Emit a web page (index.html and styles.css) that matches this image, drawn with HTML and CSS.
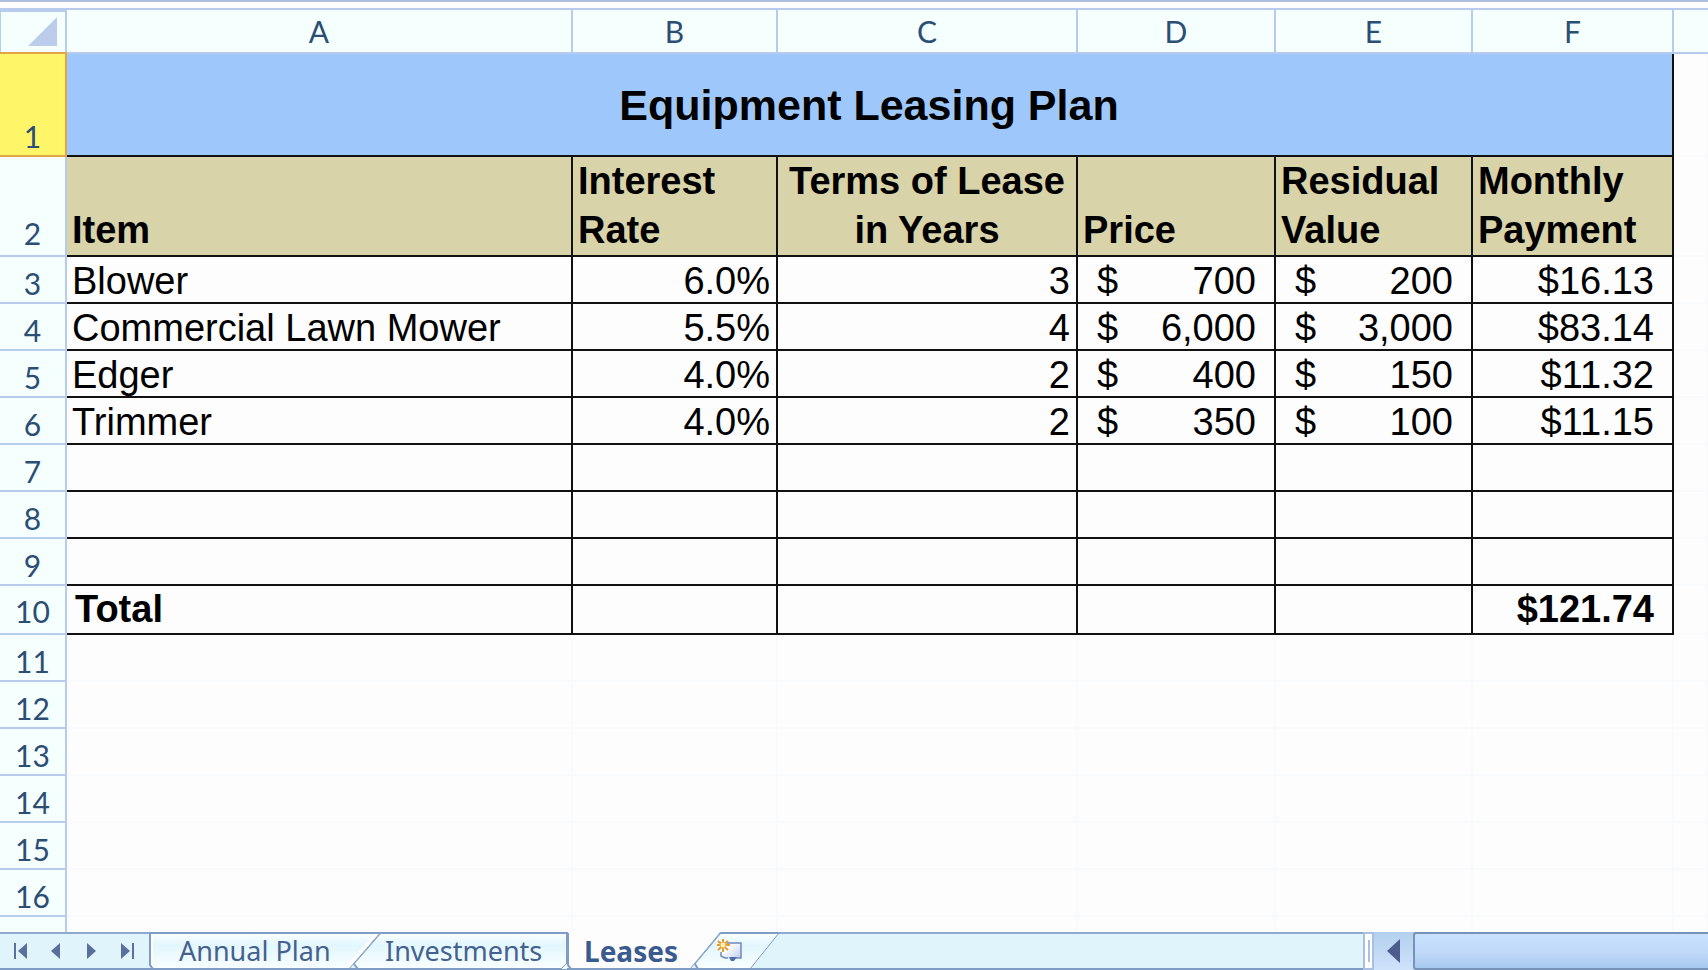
FILE: index.html
```html
<!DOCTYPE html>
<html lang="en">
<head>
  <meta charset="UTF-8">
  <meta name="viewport" content="width=device-width, initial-scale=1.0">
  <title>Equipment Leasing Plan</title>
  <link rel="stylesheet" href="styles.css">
</head>
<body>

<main class="sheet">
  <table>
    <colgroup>
      <col class="col-head">
      <col class="col-a">
      <col class="col-b">
      <col class="col-c">
      <col class="col-d">
      <col class="col-e">
      <col class="col-f">
      <col>
    </colgroup>
    <thead>
      <tr>
        <th class="corner"><svg width="30" height="30" viewBox="0 0 30 30"><path d="M29 0V29H0Z" fill="#bccdec"/></svg></th>
        <th scope="col">A</th>
        <th scope="col">B</th>
        <th scope="col">C</th>
        <th scope="col">D</th>
        <th scope="col">E</th>
        <th scope="col">F</th>
        <th></th>
      </tr>
    </thead>
    <tbody class="plan">
      <tr class="title">
        <th class="selected" scope="row">1</th>
        <td colspan="6">Equipment Leasing Plan</td>
        <td></td>
      </tr>
      <tr class="labels">
        <th scope="row">2</th>
        <td>Item</td>
        <td>Interest<br>Rate</td>
        <td class="center">Terms of Lease<br>in Years</td>
        <td>Price</td>
        <td>Residual<br>Value</td>
        <td>Monthly<br>Payment</td>
        <td></td>
      </tr>
      <tr>
        <th scope="row">3</th>
        <td>Blower</td>
        <td class="num">6.0%</td>
        <td class="num">3</td>
        <td><div class="money"><span>$</span><span>700</span></div></td>
        <td><div class="money"><span>$</span><span>200</span></div></td>
        <td class="payment">$16.13</td>
        <td></td>
      </tr>
      <tr>
        <th scope="row">4</th>
        <td>Commercial Lawn Mower</td>
        <td class="num">5.5%</td>
        <td class="num">4</td>
        <td><div class="money"><span>$</span><span>6,000</span></div></td>
        <td><div class="money"><span>$</span><span>3,000</span></div></td>
        <td class="payment">$83.14</td>
        <td></td>
      </tr>
      <tr>
        <th scope="row">5</th>
        <td>Edger</td>
        <td class="num">4.0%</td>
        <td class="num">2</td>
        <td><div class="money"><span>$</span><span>400</span></div></td>
        <td><div class="money"><span>$</span><span>150</span></div></td>
        <td class="payment">$11.32</td>
        <td></td>
      </tr>
      <tr>
        <th scope="row">6</th>
        <td>Trimmer</td>
        <td class="num">4.0%</td>
        <td class="num">2</td>
        <td><div class="money"><span>$</span><span>350</span></div></td>
        <td><div class="money"><span>$</span><span>100</span></div></td>
        <td class="payment">$11.15</td>
        <td></td>
      </tr>
      <tr><th scope="row">7</th><td></td><td></td><td></td><td></td><td></td><td></td><td></td></tr>
      <tr><th scope="row">8</th><td></td><td></td><td></td><td></td><td></td><td></td><td></td></tr>
      <tr><th scope="row">9</th><td></td><td></td><td></td><td></td><td></td><td></td><td></td></tr>
      <tr class="total">
        <th scope="row">10</th>
        <td>Total</td>
        <td></td>
        <td></td>
        <td></td>
        <td></td>
        <td class="payment">$121.74</td>
        <td></td>
      </tr>
    </tbody>
    <tbody>
      <tr><th scope="row">11</th><td></td><td></td><td></td><td></td><td></td><td></td><td></td></tr>
      <tr><th scope="row">12</th><td></td><td></td><td></td><td></td><td></td><td></td><td></td></tr>
      <tr><th scope="row">13</th><td></td><td></td><td></td><td></td><td></td><td></td><td></td></tr>
      <tr><th scope="row">14</th><td></td><td></td><td></td><td></td><td></td><td></td><td></td></tr>
      <tr><th scope="row">15</th><td></td><td></td><td></td><td></td><td></td><td></td><td></td></tr>
      <tr><th scope="row">16</th><td></td><td></td><td></td><td></td><td></td><td></td><td></td></tr>
      <tr><th></th><td></td><td></td><td></td><td></td><td></td><td></td><td></td></tr>
    </tbody>
  </table>
</main>

<footer class="bottom-bar">
  <nav class="tab-nav">
    <button aria-label="First sheet"><svg width="14" height="18" viewBox="0 0 14 18"><path d="M0 1h2v16H0zM13 1v16L4 9z"/></svg></button>
    <button aria-label="Previous sheet"><svg width="14" height="18" viewBox="0 0 14 18"><path d="M11 1v16L2 9z"/></svg></button>
    <button aria-label="Next sheet"><svg width="14" height="18" viewBox="0 0 14 18"><path d="M2 1v16l9-8z"/></svg></button>
    <button aria-label="Last sheet"><svg width="14" height="18" viewBox="0 0 14 18"><path d="M12 1h2v16h-2zM1 1v16l9-8z"/></svg></button>
  </nav>

  <div class="tabs">
    <button class="tab annual">
      <svg class="shape" width="233" height="38" viewBox="0 0 233 38">
        <defs>
          <linearGradient id="tabFill" x1="0" y1="0" x2="0" y2="1">
            <stop offset="0" stop-color="#fafeff"/>
            <stop offset=".35" stop-color="#e2f7fd"/>
            <stop offset="1" stop-color="#fafeff"/>
          </linearGradient>
        </defs>
        <path d="M1 1V33L4 37H200L231 1Z" fill="url(#tabFill)"/>
        <path d="M3 2V33" stroke="#fff" stroke-width="2"/>
        <path d="M198 36L228 2" stroke="#fff" stroke-width="4"/>
        <path class="line" d="M231 1H1V33L4 37H200"/>
        <path class="slant" d="M200 37L231 1"/>
      </svg>
      <span>Annual Plan</span>
    </button>
    <button class="tab investments">
      <svg class="shape" width="219" height="38" viewBox="0 0 219 38">
        <path d="M4 32L8 37H217V1H31Z" fill="url(#tabFill)"/>
        <path class="line" d="M4 32L8 37H211M217 31V1H31"/>
        <path class="slant" d="M31 1L4 32M211 37L217 31"/>
      </svg>
      <span>Investments</span>
    </button>
    <button class="tab leases">
      <svg class="shape" width="154" height="38" viewBox="0 0 154 38">
        <path d="M1 0V33L4 37H123L153 0Z" fill="#fdfdfd"/>
        <path class="line" d="M1 1V33L4 37H123"/>
        <path class="slant" d="M123 37L153 1"/>
      </svg>
      <span>Leases</span>
    </button>
    <button class="tab new-tab" aria-label="Insert worksheet">
      <svg class="shape" width="90" height="38" viewBox="0 0 90 38">
        <defs>
          <linearGradient id="pageFill" x1="0" y1="0" x2="1" y2="1">
            <stop offset=".3" stop-color="#fff"/>
            <stop offset="1" stop-color="#b9c9ec"/>
          </linearGradient>
        </defs>
        <path d="M5 32L8 37H60L89 1H31Z" fill="url(#tabFill)"/>
        <path class="line" d="M89 1H31M5 32L8 37H60"/>
        <path class="slant" d="M31 1L5 32M60 37L89 1"/>
        <path d="M31 11H51V26H45L42 28L37 26L31 24Z" fill="url(#pageFill)"/>
        <path d="M37 11H51V26H46M31 20V24L35 26H38" fill="none" stroke="#7188bd" stroke-width="1.5"/>
        <path d="M39 25H47L44 29H41Z" fill="#506cac"/>
        <path d="M33 7V20M27 13H40M28 9L38 18M38 9L28 18" stroke="#e89a2c" stroke-width="2"/>
        <circle cx="33" cy="13" r="3" fill="#fff3b8" stroke="#f0a93c"/>
      </svg>
    </button>
  </div>

  <div class="hscroll">
    <div class="splitter"></div>
    <button class="arrow" aria-label="Scroll left"><svg width="14" height="24" viewBox="0 0 14 24"><path d="M13 0V24L0 12Z" fill="#4d5c8c"/></svg></button>
    <div class="thumb"></div>
  </div>
</footer>

</body>
</html>
```

FILE: styles.css
```css
* {
  box-sizing: border-box;
}
body {
  margin: 0;
  height: 100vh;
  display: flex;
  flex-direction: column;
  overflow: hidden;
  background-color: #fdfdfd;
  color: #000;
  font-family: "Liberation Sans", Arial, sans-serif;
}
button {
  margin: 0;
  padding: 0;
  border: 0;
  background: none;
  font: inherit;
  color: inherit;
}

/* grid */
.sheet {
  flex: 1;
  min-height: 0;
  overflow: hidden;
  border-top: 2px solid #b0c1e0;
  padding-top: 6px;
}
table {
  width: 100%;
  table-layout: fixed;
  border-collapse: separate;
  border-spacing: 0;
  font-size: 38px;
  line-height: 42px;
}
.col-head { width: 67px; }
.col-a { width: 506px; }
.col-b { width: 205px; }
.col-c { width: 300px; }
.col-d { width: 198px; }
.col-e { width: 197px; }
.col-f { width: 201px; }
tr {
  height: 47px;
}
th {
  padding: 0 0 1px;
  border-right: 2px solid #b9cbec;
  border-bottom: 2px solid #b9cbec;
  background-color: #f5fffe;
  color: #2c4d74;
  font-family: Lato, sans-serif;
  font-size: 30px;
  font-weight: 400;
  line-height: 36px;
  vertical-align: bottom;
}
thead tr {
  height: 46px;
}
thead th {
  border-top: 2px solid #b9cbec;
  padding: 0;
  vertical-align: middle;
}
thead th:last-child {
  border-right: 0;
}
thead .corner {
  border-top-width: 4px;
  border-left: 1px solid #b9cbec;
  padding: 0 7px 0 0;
  text-align: right;
}
.corner svg {
  display: block;
  margin-left: auto;
}
td {
  padding: 0 6px 0 5px;
  border-right: 2px solid #f9fafc;
  border-bottom: 2px solid #f9fafc;
  vertical-align: bottom;
}
.plan td {
  border-color: #111;
}
.plan td:last-child {
  border-color: #f9fafc;
}
.title {
  height: 103px;
}
.title td:nth-child(2) {
  background-color: #9ec8fc;
  font-size: 43px;
  font-weight: 700;
  text-align: center;
  vertical-align: middle;
}
.title .selected {
  background-color: #fff569;
  border-color: #e2a546;
  box-shadow: 0 -2px #e2a546;
}
.labels {
  height: 100px;
  font-weight: 700;
  line-height: 49px;
}
.labels td:not(:last-child) {
  background-color: #d9d3a9;
}
.labels td {
  padding-right: 0;
}
.labels .center {
  padding-left: 0;
  text-align: center;
}
.labels th,
.total th {
  padding-bottom: 4px;
}
.total {
  height: 49px;
  font-weight: 700;
}
.total td {
  padding-bottom: 3px;
  padding-left: 8px;
}
.num {
  text-align: right;
}
.plan .payment {
  padding-right: 18px;
  text-align: right;
}
.money {
  display: flex;
  justify-content: space-between;
  padding: 0 12px 0 14px;
}

/* sheet tabs and scrollbar */
.bottom-bar {
  display: flex;
  flex: none;
  height: 38px;
  background-color: #e0f4fc;
  border-top: 2px solid #8fa9d0;
  border-bottom: 2px solid #7f9cc6;
}
.tab-nav {
  display: flex;
  align-items: center;
  justify-content: space-between;
  width: 149px;
  padding: 0 15px 0 14px;
}
.tab-nav button {
  display: flex;
}
.tab-nav svg {
  fill: #5a6f9c;
}
.tabs {
  display: flex;
  height: 38px;
  margin-top: -2px;
}
.tab {
  position: relative;
  height: 38px;
  color: #45618f;
  font-family: "Noto Sans", sans-serif;
  font-size: 27px;
  line-height: 38px;
  text-align: left;
  white-space: nowrap;
}
.tab span {
  position: relative;
}
.shape {
  position: absolute;
  top: 0;
  left: 0;
}
.line {
  fill: none;
  stroke: #7f9cc6;
  stroke-width: 2;
}
.slant {
  fill: none;
  stroke: #7f9cc6;
  stroke-width: 1;
}
.annual {
  width: 233px;
  padding-left: 30px;
}
.investments {
  width: 219px;
  margin-left: -32px;
  padding-left: 35px;
}
.leases {
  width: 154px;
  margin-left: -2px;
  padding-left: 17px;
  color: #3a5a90;
  font-size: 28px;
  font-weight: 700;
}
.new-tab {
  width: 90px;
  margin-left: -31px;
}
.hscroll {
  display: flex;
  flex: 0 0 345px;
  height: 38px;
  margin-top: -2px;
  margin-left: auto;
  background: linear-gradient(#b2d0ee, #cfe2fb);
}
.splitter {
  width: 11px;
  border: 2px solid #a9c0e2;
  background: linear-gradient(#a9c0e2, #a9c0e2) center / 2px 22px no-repeat #fff;
}
.arrow {
  display: flex;
  align-items: center;
  justify-content: center;
  width: 39px;
}
.thumb {
  flex: 1;
  border: 2px solid #7794b8;
  border-right: 0;
  border-radius: 3px 0 0 3px;
  background: linear-gradient(#c9e2ff, #c0d8f8 55%, #a6c9ee);
}
```
